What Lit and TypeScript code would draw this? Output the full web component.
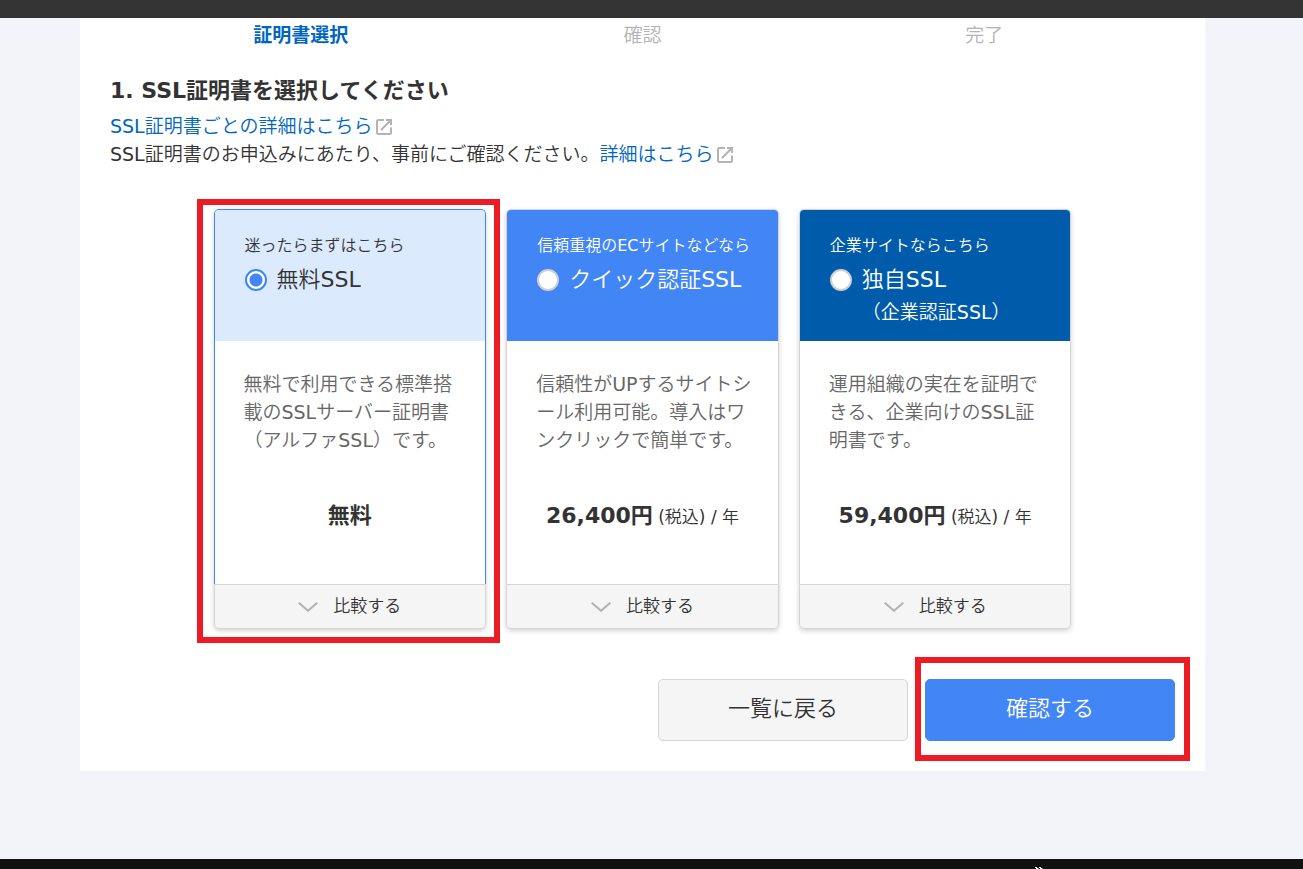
import { LitElement, html, css, svg, nothing } from "lit";
import { customElement, property, state } from "lit/decorators.js";

interface Plan {
  id: string;
  catch: string;
  name: string;
  sub?: string;
  tone: "light" | "blue" | "navy";
  text: string;
  price: string;
  unit?: string;
}

const PLANS: Plan[] = [
  {
    id: "free",
    catch: "迷ったらまずはこちら",
    name: "無料SSL",
    tone: "light",
    text: "無料で利用できる標準搭載のSSLサーバー証明書（アルファSSL）です。",
    price: "無料",
  },
  {
    id: "quick",
    catch: "信頼重視のECサイトなどなら",
    name: "クイック認証SSL",
    tone: "blue",
    text: "信頼性がUPするサイトシール利用可能。導入はワンクリックで簡単です。",
    price: "26,400円",
    unit: "(税込) / 年",
  },
  {
    id: "company",
    catch: "企業サイトならこちら",
    name: "独自SSL",
    sub: "（企業認証SSL）",
    tone: "navy",
    text: "運用組織の実在を証明できる、企業向けのSSL証明書です。",
    price: "59,400円",
    unit: "(税込) / 年",
  },
];

const externalIcon = html`<svg class="external" viewBox="0 0 16 16" aria-hidden="true">
  ${svg`<path d="M8 1H2.5Q1 1 1 2.5V13.500Q1 15 2.500 15H13.500Q15 15 15 13.500V8.500M10 1H15V6M15 1L5 11" />`}
</svg>`;

const strongText = css`
  .strong {
    font-family: "DejaVu Sans", "Noto Sans CJK JP", sans-serif;
    font-weight: 700;
  }
`;

@customElement("plan-card")
export class PlanCard extends LitElement {
  @property({ attribute: false }) plan!: Plan;
  @property({ type: Boolean }) selected = false;

  static styles = [
    strongText,
    css`
      :host {
        display: flex;
        min-width: 0;
      }
      .card {
        flex: 1;
        min-width: 0;
        display: flex;
        flex-direction: column;
        border-radius: 5px;
        box-shadow: 0 2px 5px rgba(0, 0, 0, 0.18);
      }
      .main {
        flex: 1;
        border: 1px solid #d5d5d5;
        border-bottom: 0;
        border-radius: 5px 5px 0 0;
        background: #fff;
      }
      .selected .main {
        border-color: #4285f4;
      }
      .head {
        display: grid;
        grid-template-columns: 22px 1fr;
        column-gap: 10px;
        align-content: start;
        box-sizing: border-box;
        min-height: 131px;
        padding: 22px 20px 14px 30px;
        border-radius: 4px 4px 0 0;
        color: #fff;
        white-space: nowrap;
      }
      .light {
        background: #dceafd;
        color: #333;
      }
      .blue {
        background: #4285f4;
      }
      .navy {
        background: #005bab;
      }
      .catch {
        grid-column: 1 / 3;
        font-size: 16px;
        line-height: 28px;
      }
      .radio {
        appearance: none;
        align-self: center;
        width: 22px;
        height: 22px;
        margin: 0;
        border: 2px solid #d0d0d0;
        border-radius: 50%;
        background: #fff;
      }
      .radio:checked {
        border-color: #4285f4;
        background: radial-gradient(circle, #4285f4 6px, #fff 7px);
      }
      .name {
        font-size: 22px;
        line-height: 40px;
      }
      .sub {
        grid-column: 2;
        font-size: 19px;
        line-height: 24px;
      }
      .text {
        margin: 0;
        padding: 29px 24px 0 29px;
        font-size: 19px;
        line-height: 28px;
        min-height: 84px;
        color: #666;
        line-break: loose;
      }
      .price {
        margin: 0;
        padding: 44px 0 49px;
        text-align: center;
        line-height: 36px;
        font-size: 17px;
        white-space: nowrap;
      }
      .amount {
        font-size: 22px;
      }
      .compare {
        display: flex;
        align-items: center;
        justify-content: center;
        gap: 15px;
        height: 45px;
        padding: 0 0 2px;
        border: 1px solid #d5d5d5;
        border-radius: 0 0 5px 5px;
        background: #f5f5f5;
        color: #333;
        font: inherit;
        font-size: 17px;
        cursor: pointer;
      }
      .chevron {
        width: 20px;
        height: 10px;
        margin-top: 3px;
        fill: none;
        stroke: #b3b3b3;
        stroke-width: 2;
      }
    `,
  ];

  private pick() {
    this.dispatchEvent(new CustomEvent("pick", { detail: this.plan.id }));
  }

  render() {
    const p = this.plan;
    return html`
      <div class="card ${this.selected ? "selected" : ""}">
        <div class="main">
          <div class="head ${p.tone}">
            <span class="catch">${p.catch}</span>
            <input class="radio" type="radio" id="choice" name="plan" .checked=${this.selected} @change=${this.pick} />
            <label class="name" for="choice">${p.name}</label>
            ${p.sub ? html`<span class="sub">${p.sub}</span>` : nothing}
          </div>
          <p class="text">${p.text}</p>
          <p class="price"><span class="amount strong">${p.price}</span>${p.unit ? html` <span>${p.unit}</span>` : nothing}</p>
        </div>
        <button class="compare" type="button">
          <svg class="chevron" viewBox="0 0 20 10" aria-hidden="true"><path d="M0.700 0.700L10 8.800L19.300 0.700" /></svg>
          比較する
        </button>
      </div>
    `;
  }
}

@customElement("app-root")
export class AppRoot extends LitElement {
  @state() private selected = "free";

  static styles = [
    strongText,
    css`
      :host {
        display: flex;
        flex-direction: column;
        min-height: 100vh;
        background: #f3f4f9;
        color: #333;
        font-family: "DejaVu Sans", "Noto Sans CJK JP DemiLight", "Noto Sans CJK JP", sans-serif;
        font-size: 19px;
        line-height: 28px;
        text-spacing-trim: space-all;
      }
      .topbar {
        height: 18px;
        background: #333;
      }
      .page {
        flex: 1;
        padding: 0 98px 0 80px;
      }
      .panel {
        padding: 3px 30px 30px;
        background: #fff;
      }
      .steps {
        display: grid;
        grid-template-columns: repeat(3, 1fr);
        margin: 0 20px;
        padding: 0;
        list-style: none;
        text-align: center;
        color: #b3b3b3;
      }
      .current {
        color: #0066c0;
      }
      .title {
        margin: 24px 0 3px;
        font-size: 22px;
        line-height: 36px;
      }
      .note {
        margin: 0;
      }
      .link {
        color: #0066c0;
        text-decoration: none;
      }
      .external {
        width: 16px;
        height: 16px;
        margin-left: 3px;
        vertical-align: -2px;
        fill: none;
        stroke: #b3b3b3;
        stroke-width: 2;
      }
      .plans {
        display: grid;
        grid-template-columns: repeat(3, minmax(0, 1fr));
        gap: 20px;
        max-width: 858px;
        margin: 41px auto 50px;
      }
      .slot {
        position: relative;
        display: grid;
      }
      .mark {
        position: absolute;
        border: 6px solid #ed1c24;
        pointer-events: none;
      }
      .mark-plan {
        inset: -10px -14px -14px -17px;
      }
      .mark-submit {
        inset: -22px -15px -20px -10px;
      }
      .actions {
        display: flex;
        justify-content: flex-end;
        gap: 17px;
      }
      .button {
        width: 250px;
        height: 62px;
        padding: 0 0 2px;
        border: 1px solid #d5d5d5;
        border-radius: 5px;
        background: #f5f5f5;
        color: #333;
        font: inherit;
        font-size: 22px;
        cursor: pointer;
      }
      .primary {
        border-color: #4285f4;
        background: #4285f4;
        color: #fff;
      }
      .footer {
        display: flex;
        justify-content: flex-end;
        height: 10px;
        padding-right: 260px;
        background: #111;
        overflow: hidden;
      }
      .more {
        width: 8px;
        height: 10px;
        fill: none;
        stroke: #fff;
        stroke-width: 1;
      }
    `,
  ];

  render() {
    return html`
      <div class="topbar"></div>
      <main class="page">
        <section class="panel">
          <ol class="steps">
            <li class="current strong" aria-current="step">証明書選択</li>
            <li>確認</li>
            <li>完了</li>
          </ol>
          <h2 class="title strong">1. SSL証明書を選択してください</h2>
          <p class="note"><a class="link" href="#about">SSL証明書ごとの詳細はこちら</a>${externalIcon}</p>
          <p class="note">SSL証明書のお申込みにあたり、事前にご確認ください。<a class="link" href="#terms">詳細はこちら</a>${externalIcon}</p>
          <div class="plans" role="radiogroup" aria-label="SSL証明書">
            ${PLANS.map(
              (p) => html`<div class="slot">
                <plan-card
                  .plan=${p}
                  .selected=${this.selected === p.id}
                  @pick=${(e: CustomEvent<string>) => (this.selected = e.detail)}
                ></plan-card>
                ${p.id === "free" ? html`<span class="mark mark-plan"></span>` : nothing}
              </div>`
            )}
          </div>
          <div class="actions">
            <button class="button" type="button">一覧に戻る</button>
            <div class="slot">
              <button class="button primary" type="button">確認する</button>
              <span class="mark mark-submit"></span>
            </div>
          </div>
        </section>
      </main>
      <footer class="footer">
        <svg class="more" viewBox="0 0 8 10" aria-hidden="true"><path d="M0 8.500H2M1 9.500H3.500M4 8.500H6M5 9.500H7.500" /></svg>
      </footer>
    `;
  }
}
